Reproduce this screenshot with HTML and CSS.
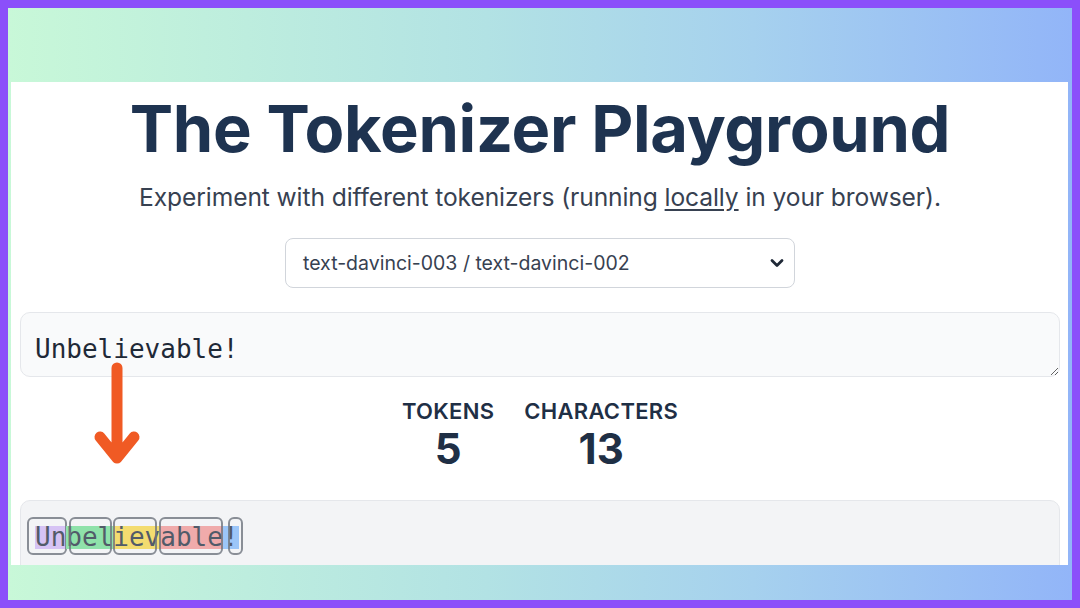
FILE: index.html
```html
<!DOCTYPE html>
<html lang="en">
<head>
  <meta charset="UTF-8">
  <meta name="viewport" content="width=device-width, initial-scale=1.0">
  <title>The Tokenizer Playground</title>
  <link rel="stylesheet" href="styles.css">
</head>
<body>
  <div class="frame">
    <div class="panel">
      <h1>The Tokenizer Playground</h1>
      <p class="subtitle">Experiment with different tokenizers (running <a href="#">locally</a> in your browser).</p>

      <div class="select-row">
        <div class="select">
          <span>text-davinci-003 / text-davinci-002</span>
          <svg class="chevron" width="14" height="10" viewBox="0 0 14 10">
            <path d="M2 2.5 L7 7.5 L12 2.5" fill="none" stroke="#1f2937" stroke-width="2.8" stroke-linecap="round" stroke-linejoin="round"/>
          </svg>
        </div>
      </div>

      <textarea class="input" spellcheck="false">Unbelievable!</textarea>

      <div class="stats">
        <div class="stat">
          <div class="stat-label">TOKENS</div>
          <div class="stat-value">5</div>
        </div>
        <div class="stat">
          <div class="stat-label">CHARACTERS</div>
          <div class="stat-value">13</div>
        </div>
      </div>

      <div class="output">
        <span class="token t-purple">Un</span><span class="token t-green">bel</span><span class="token t-yellow">iev</span><span class="token t-red">able</span><span class="token t-blue">!</span>
      </div>

      <!-- annotation arrow over the page -->
      <svg class="arrow" width="55" height="110" viewBox="0 0 55 110">
        <path d="M27 10 L27 100 M10 79 L27 100 L44 79" fill="none" stroke="#f05a24" stroke-width="11" stroke-linecap="round" stroke-linejoin="round"/>
      </svg>
    </div>
  </div>
</body>
</html>
```

FILE: styles.css
```css
html, body {
  margin: 0;
  padding: 0;
}
body {
  width: 1080px;
  height: 608px;
  background-color: #8b4ffa;
  padding: 8px;
  box-sizing: border-box;
  font-family: "Inter", "Liberation Sans", sans-serif;
  overflow: hidden;
}
.frame {
  height: 100%;
  padding: 74px 4px 35px 3px;
  box-sizing: border-box;
  background: linear-gradient(90deg, #c8f8d8 0%, #b2e2e4 45%, #a6d1ee 70%, #92b5f8 100%);
}
.panel {
  position: relative;
  height: 100%;
  background-color: #fff;
  overflow: hidden;
  padding: 0 8px 0 9px;
  text-align: center;
  color: #1e3350;
}
h1 {
  margin: 0;
  padding-top: 14px;
  font-size: 65px;
  line-height: 66px;
  font-weight: 700;
  letter-spacing: -0.3px;
  color: #1e3350;
}
.subtitle {
  margin: 20px 0 0;
  font-size: 24.6px;
  line-height: 30px;
  letter-spacing: -0.1px;
  color: #374151;
}
.subtitle a {
  color: #374151;
  text-decoration: underline;
  text-underline-offset: 3px;
}
.select-row {
  display: flex;
  justify-content: center;
  margin-top: 26px;
}
.select {
  width: 510px;
  height: 50px;
  box-sizing: border-box;
  display: flex;
  align-items: center;
  justify-content: space-between;
  padding: 0 10px 0 17px;
  border: 1px solid #d1d5db;
  border-radius: 8px;
  font-size: 19.5px;
  color: #374151;
  background-color: #fff;
}
.input {
  display: block;
  width: 100%;
  height: 65px;
  box-sizing: border-box;
  margin-top: 24px;
  padding: 21px 14px 0;
  border: 1px solid #e5e7eb;
  border-radius: 10px;
  background-color: #f9fafb;
  font-family: "DejaVu Sans Mono", monospace;
  font-size: 26px;
  line-height: 30px;
  color: #1f2937;
  resize: vertical;
  outline: none;
}
.stats {
  display: flex;
  justify-content: center;
  gap: 30px;
  margin-top: 21px;
}
.stat {
  display: flex;
  flex-direction: column;
  align-items: center;
}
.stat-label {
  font-size: 22px;
  line-height: 26px;
  font-weight: 600;
  letter-spacing: 0.3px;
  color: #1f2f45;
}
.stat-value {
  font-size: 42px;
  line-height: 50px;
  font-weight: 700;
  color: #1f2f45;
}
.output {
  margin-top: 26px;
  height: 90px;
  padding: 21px 14px;
  box-sizing: border-box;
  border: 1px solid #e5e7eb;
  border-radius: 10px;
  background-color: #f3f4f6;
  text-align: left;
  font-family: "DejaVu Sans Mono", monospace;
  font-size: 26px;
  color: #525b69;
}
.token {
  position: relative;
  display: inline-block;
  line-height: 23px;
}
/* rounded outline round each token */
.token::after {
  content: "";
  position: absolute;
  top: -9px;
  bottom: -6px;
  left: 0;
  right: 0;
  border: 2px solid rgba(110, 116, 126, 0.8);
  border-radius: 6px;
}
.token:nth-child(1)::after { left: -8px; right: -1px; }
.token:nth-child(2)::after { left: 3px; right: 1px; }
.token:nth-child(3)::after { left: 0; right: 3px; }
.token:nth-child(4)::after { left: -1px; right: 0; }
.token:nth-child(5)::after { left: 5px; right: -4px; }
.t-purple { background-color: #d6c3f4; }
.t-green { background-color: #8fe2aa; }
.t-yellow { background-color: #f3dc70; }
.t-red { background-color: #f0abab; }
.t-blue { background-color: #9cc6f8; }
.arrow {
  position: absolute;
  left: 79px;
  top: 276px;
}
```
